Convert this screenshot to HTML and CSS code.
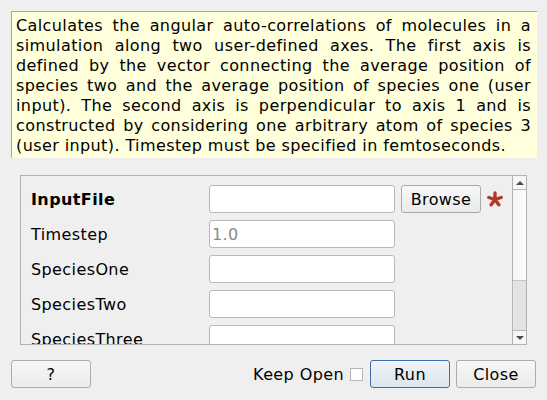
FILE: index.html
```html
<!DOCTYPE html>
<html>
<head>
<meta charset="utf-8">
<link rel="stylesheet" href="styles.css">
</head>
<body>
<div class="desc">
  <span class="ln">Calculates the angular auto-correlations of molecules in a</span>
  <span class="ln">simulation along two user-defined axes. The first axis is</span>
  <span class="ln">defined by the vector connecting the average position of</span>
  <span class="ln">species two and the average position of species one (user</span>
  <span class="ln">input). The second axis is perpendicular to axis 1 and is</span>
  <span class="ln">constructed by considering one arbitrary atom of species 3</span>
  <span class="ln last">(user input). Timestep must be specified in femtoseconds.</span>
</div>

<div class="scrollarea">
  <div class="viewport">
    <div class="form">
      <div class="label bold">InputFile</div>
      <div class="field"></div>
      <div class="btn browse">Browse</div>
      <svg class="req" width="16" height="16" viewBox="0 0 16 16">
        <g stroke="#b3372b" stroke-width="3.4" stroke-linecap="round">
          <line x1="8" y1="8.5" x2="8" y2="2"/>
          <line x1="8" y1="8.5" x2="14.2" y2="6.5"/>
          <line x1="8" y1="8.5" x2="11.8" y2="13.8"/>
          <line x1="8" y1="8.5" x2="4.2" y2="13.8"/>
          <line x1="8" y1="8.5" x2="1.8" y2="6.5"/>
        </g>
      </svg>

      <div class="label">Timestep</div>
      <div class="field"><span class="ph">1.0</span></div>
      <div></div><div></div>

      <div class="label">SpeciesOne</div>
      <div class="field"></div>
      <div></div><div></div>

      <div class="label">SpeciesTwo</div>
      <div class="field"></div>
      <div></div><div></div>

      <div class="label">SpeciesThree</div>
      <div class="field"></div>
      <div></div><div></div>
    </div>
  </div>
  <div class="scrollbar">
    <div class="arrow up"><span class="tri-up"></span></div>
    <div class="handle"></div>
    <div class="track"></div>
    <div class="arrow down"><span class="tri-down"></span></div>
  </div>
</div>

<div class="footer">
  <div class="btn help">?</div>
  <div class="spacer"></div>
  <span class="keep">Keep Open</span>
  <span class="check"></span>
  <div class="btn run">Run</div>
  <div class="btn close">Close</div>
</div>
</body>
</html>
```

FILE: styles.css
```css
html, body {
  margin: 0;
  padding: 0;
}
body {
  width: 547px;
  height: 400px;
  background: #efefef;
  font-family: "DejaVu Sans", sans-serif;
  font-size: 16px;
  letter-spacing: 0.4px;
  color: #000;
  overflow: hidden;
}
.desc {
  margin: 11px 10px 0 11px;
  border-top: 1px solid #a6a6a6;
  border-left: 1px solid #a6a6a6;
  background: #ffffdc;
  padding: 4px 6px 2px 4px;
  line-height: 20px;
}
.ln {
  display: block;
  text-align: justify;
  text-align-last: justify;
}
.ln.last {
  text-align-last: left;
}
.scrollarea {
  display: flex;
  margin: 17px 20px 0 20px;
  height: 170px;
  box-sizing: border-box;
  border: 1px solid #b2b2b2;
}
.viewport {
  flex: 1;
  overflow: hidden;
  padding: 9px 0 0 10px;
}
.form {
  display: grid;
  grid-template-columns: 172px 186px 80px 16px;
  grid-auto-rows: 28px;
  column-gap: 6px;
  row-gap: 7px;
  align-items: center;
}
.label {
  white-space: nowrap;
}
.bold {
  font-weight: bold;
}
.field {
  height: 28px;
  box-sizing: border-box;
  border: 1px solid #b9b9b9;
  border-radius: 3px;
  background: #fff;
  display: flex;
  align-items: center;
  padding-left: 2px;
}
.ph {
  color: #8a8a8a;
}
.btn {
  height: 28px;
  box-sizing: border-box;
  border: 1px solid #ababab;
  border-radius: 3px;
  background: linear-gradient(#f7f7f7, #ebebeb);
  display: flex;
  align-items: center;
  justify-content: center;
}
.req {
  display: block;
}
.scrollbar {
  width: 14px;
  box-sizing: border-box;
  border-left: 1px solid #b2b2b2;
  display: flex;
  flex-direction: column;
  background: #e2e2e2;
}
.arrow {
  height: 14px;
  box-sizing: border-box;
  background: #f6f6f6;
  display: flex;
  align-items: center;
  justify-content: center;
}
.arrow.up {
  border-bottom: 1px solid #b8b8b8;
}
.arrow.down {
  border-top: 1px solid #b8b8b8;
}
.tri-up {
  width: 0;
  height: 0;
  border-left: 4px solid transparent;
  border-right: 4px solid transparent;
  border-bottom: 4px solid #4a4a4a;
}
.tri-down {
  width: 0;
  height: 0;
  border-left: 4px solid transparent;
  border-right: 4px solid transparent;
  border-top: 4px solid #4a4a4a;
}
.handle {
  height: 91px;
  box-sizing: border-box;
  background: linear-gradient(90deg, #f4f4f4, #fbfbfb);
  border-bottom: 1px solid #c4c4c4;
}
.track {
  flex: 1;
  background: #e3e3e3;
  border-left: 1px solid #ececec;
}
.footer {
  display: flex;
  align-items: center;
  margin-top: 15px;
  padding: 0 11px;
}
.help {
  width: 80px;
}
.spacer {
  flex: 1;
}
.keep {
  white-space: nowrap;
}
.check {
  width: 13px;
  height: 13px;
  box-sizing: border-box;
  border: 1px solid #b5b5b5;
  background: #fff;
  margin-left: 6px;
}
.run {
  width: 80px;
  margin-left: 7px;
  border-color: #3b71aa;
  background: linear-gradient(#eef3f8, #dce5ee);
}
.close {
  width: 80px;
  margin-left: 6px;
}
```
